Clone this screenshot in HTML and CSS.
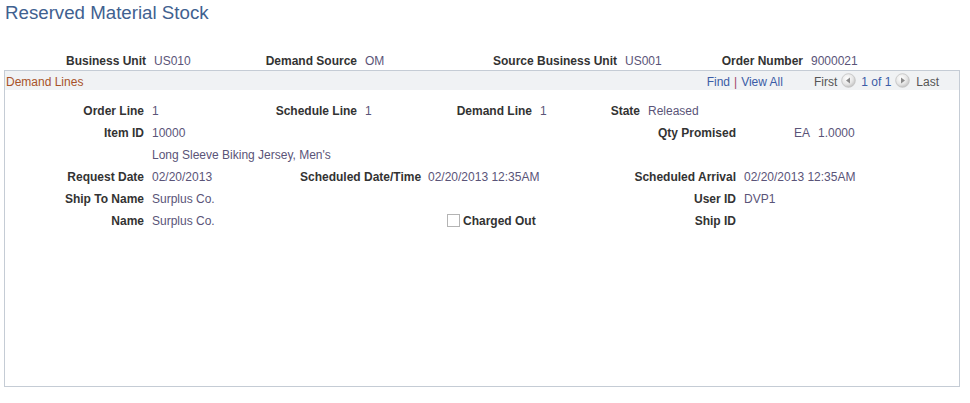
FILE: index.html
```html
<!DOCTYPE html>
<html>
<head>
<meta charset="utf-8">
<link rel="stylesheet" href="styles.css">
</head>
<body>
<h1 class="title">Reserved Material Stock</h1>
<div class="hdr-row">
  <span class="lbl">Business Unit</span><span class="val">US010</span>
  <span class="lbl">Demand Source</span><span class="val">OM</span>
  <span class="lbl">Source Business Unit</span><span class="val">US001</span>
  <span class="lbl">Order Number</span><span class="val">9000021</span>
</div>
<div class="box">
  <div class="band">
    <span class="band-title">Demand Lines</span>
    <div class="nav">
      <span class="link">Find</span><span class="sep">|</span><span class="link">View All</span>
      <span class="first">First</span>
      <svg class="arrow" width="15" height="15" viewBox="0 0 15 15"><defs><radialGradient id="g1" cx="0.4" cy="0.35" r="0.7"><stop offset="0" stop-color="#ffffff"/><stop offset="0.6" stop-color="#e6e6e6"/><stop offset="1" stop-color="#bdbdbd"/></radialGradient></defs><circle cx="7.5" cy="7.5" r="6.8" fill="url(#g1)" stroke="#c2c2c2" stroke-width="0.8"/><polygon points="5,7.5 9,4.5 9,10.5" fill="#8a8a8a"/></svg>
      <span class="count">1 of 1</span>
      <svg class="arrow arrow-r" width="15" height="15" viewBox="0 0 15 15"><defs><radialGradient id="g2" cx="0.4" cy="0.35" r="0.7"><stop offset="0" stop-color="#ffffff"/><stop offset="0.6" stop-color="#e6e6e6"/><stop offset="1" stop-color="#bdbdbd"/></radialGradient></defs><circle cx="7.5" cy="7.5" r="6.8" fill="url(#g2)" stroke="#c2c2c2" stroke-width="0.8"/><polygon points="10,7.5 6,4.5 6,10.5" fill="#8a8a8a"/></svg>
      <span class="last">Last</span>
    </div>
  </div>
  <div class="rows">
    <div class="row row-a">
      <span class="lbl">Order Line</span><span class="val">1</span>
      <span class="lbl">Schedule Line</span><span class="val">1</span>
      <span class="lbl">Demand Line</span><span class="val">1</span>
      <span class="lbl">State</span><span class="val">Released</span>
    </div>
    <div class="row row-b">
      <span class="lbl">Item ID</span><span class="val">10000</span>
      <span class="lbl">Qty Promised</span><span class="val"><span class="uom">EA</span><span class="qty">1.0000</span></span>
    </div>
    <div class="row row-c">
      <span class="lbl"></span><span class="val">Long Sleeve Biking Jersey, Men's</span>
    </div>
    <div class="row row-d">
      <span class="lbl">Request Date</span><span class="val">02/20/2013</span>
      <span class="lbl">Scheduled Date/Time</span><span class="val">02/20/2013 12:35AM</span>
      <span class="lbl">Scheduled Arrival</span><span class="val">02/20/2013 12:35AM</span>
    </div>
    <div class="row row-e">
      <span class="lbl">Ship To Name</span><span class="val">Surplus Co.</span>
      <span class="lbl">User ID</span><span class="val">DVP1</span>
    </div>
    <div class="row row-f">
      <span class="lbl">Name</span><span class="val">Surplus Co.</span>
      <span class="chk"><span class="chkbox"></span><span class="chklbl">Charged Out</span></span>
      <span class="lbl">Ship ID</span><span class="val"></span>
    </div>
  </div>
</div>
</body>
</html>
```

FILE: styles.css
```css
html, body {
  margin: 0;
  padding: 0;
  background: #ffffff;
}
body {
  font-family: "Liberation Sans", Arial, sans-serif;
  font-size: 12px;
  color: #333333;
}
.title {
  margin: 0;
  padding: 2px 0 0 5px;
  height: 24px;
  line-height: 22px;
  font-size: 18.7px;
  font-weight: normal;
  color: #3f6190;
}
.lbl {
  font-weight: bold;
  color: #333333;
  text-align: right;
  white-space: nowrap;
}
.val {
  padding-left: 8px;
  color: #5a5478;
  white-space: nowrap;
}
.hdr-row {
  margin-top: 26px;
  height: 18px;
  line-height: 18px;
  display: grid;
  grid-template-columns: 146px 74px 137px 63px 197px 63px 123px 1fr;
}
.box {
  margin-left: 4px;
  width: 956px;
  height: 317px;
  box-sizing: border-box;
  border: 1px solid #c5ccd5;
}
.band {
  height: 19px;
  box-sizing: border-box;
  padding-top: 3px;
  line-height: 16px;
  background: #f0f2f4;
  display: flex;
  justify-content: space-between;
  align-items: center;
}
.band-title {
  padding-left: 1px;
  color: #a8522a;
}
.nav {
  display: flex;
  align-items: center;
  padding-right: 20px;
  color: #555555;
}
.link {
  color: #3b5ca6;
}
.sep {
  color: #a0426a;
  margin: 0 4px 0 4px;
}
.first {
  margin-left: 31px;
}
.arrow {
  display: block;
  margin-left: 4px;
  margin-top: -4px;
}
.count {
  margin-left: 5px;
  color: #3b5ca6;
}
.arrow-r {
  margin-left: 4px;
}
.last {
  margin-left: 6px;
}
.rows {
  padding-top: 10px;
}
.row {
  display: grid;
  height: 22px;
  line-height: 22px;
}
.row-a { grid-template-columns: 139px 76px 137px 63px 112px 48px 60px 1fr; }
.row-b { grid-template-columns: 139px 416px 176px 1fr; }
.row-c { grid-template-columns: 139px 1fr; }
.row-d { grid-template-columns: 139px 156px 120px 180px 136px 1fr; }
.row-e { grid-template-columns: 139px 456px 136px 1fr; }
.row-f { grid-template-columns: 139px 303px 153px 136px 1fr; }
.uom {
  display: inline-block;
  width: 66px;
  text-align: right;
}
.qty {
  margin-left: 8px;
}
.chk {
  display: flex;
  align-items: center;
}
.chkbox {
  width: 11px;
  height: 11px;
  border: 1px solid #b4b4b4;
  background: #ffffff;
  margin-top: -2px;
}
.chklbl {
  margin-left: 3px;
  font-weight: bold;
  color: #333333;
}
```
